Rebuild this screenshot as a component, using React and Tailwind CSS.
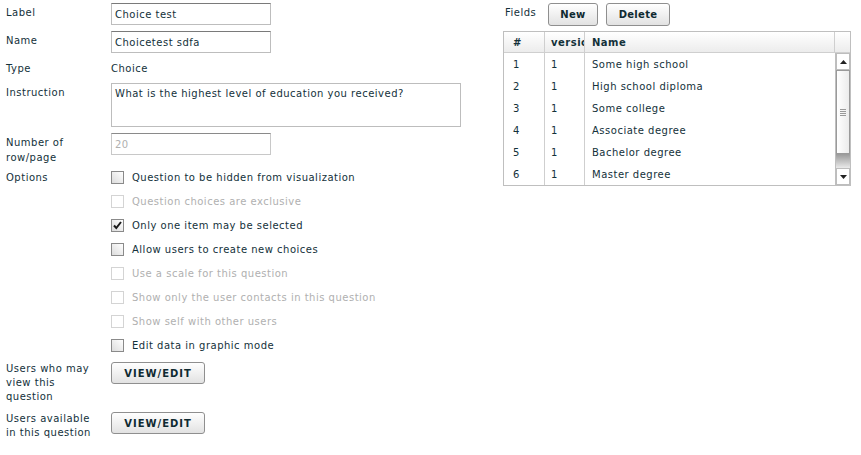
import React from 'react';

const options = [
  { text: 'Question to be hidden from visualization', disabled: false, checked: false },
  { text: 'Question choices are exclusive', disabled: true, checked: false },
  { text: 'Only one item may be selected', disabled: false, checked: true },
  { text: 'Allow users to create new choices', disabled: false, checked: false },
  { text: 'Use a scale for this question', disabled: true, checked: false },
  { text: 'Show only the user contacts in this question', disabled: true, checked: false },
  { text: 'Show self with other users', disabled: true, checked: false },
  { text: 'Edit data in graphic mode', disabled: false, checked: false },
];

const fields = [
  { id: 1, version: 1, name: 'Some high school' },
  { id: 2, version: 1, name: 'High school diploma' },
  { id: 3, version: 1, name: 'Some college' },
  { id: 4, version: 1, name: 'Associate degree' },
  { id: 5, version: 1, name: 'Bachelor degree' },
  { id: 6, version: 1, name: 'Master degree' },
];

const Checkbox = ({ checked, disabled }) => (
  <div
    className={`w-[13px] h-[13px] border flex items-center justify-center ${
      disabled
        ? 'border-[#d4d4d4] bg-white'
        : 'border-[#8a8a8a] bg-gradient-to-tr from-[#dcdcdc] to-white'
    }`}
  >
    {checked && (
      <svg width="9" height="9" viewBox="0 0 9 9">
        <path d="M1 4.5 L3.3 7 L8 1" fill="none" stroke="#1a1a1a" strokeWidth="2" />
      </svg>
    )}
  </div>
);

const Button = ({ children, className = '' }) => (
  <button
    className={`h-[22px] border border-[#8f8f8f] rounded-[3px] bg-gradient-to-b from-white to-[#e2e2e2] font-bold text-[#0f2a31] tracking-[0.3px] ${className}`}
  >
    {children}
  </button>
);

const Label = ({ children }) => (
  <div className="w-[105px] shrink-0 pt-[2px] pr-[10px] leading-[15px]">{children}</div>
);

const App = () => {
  return (
    <div className="w-[861px] h-[455px] bg-white text-[#13313a] text-[10px] tracking-[0.5px] font-['DejaVu_Sans',sans-serif] flex overflow-hidden">
      {/* Form */}
      <div className="w-[497px] pl-[6px] flex flex-col">
        <div className="flex mt-[3px]">
          <Label>Label</Label>
          <div className="w-[160px] h-[22px] border border-[#bdbdbd] border-t-[#7a7a7a] px-[3px] flex items-center">Choice test</div>
        </div>
        <div className="flex mt-[6px]">
          <Label>Name</Label>
          <div className="w-[160px] h-[22px] border border-[#bdbdbd] border-t-[#7a7a7a] px-[3px] flex items-center">Choicetest sdfa</div>
        </div>
        <div className="flex mt-[6px] h-[18px] items-center">
          <div className="w-[105px] shrink-0">Type</div>
          <div>Choice</div>
        </div>
        <div className="flex mt-[6px]">
          <Label>Instruction</Label>
          <div className="w-[350px] h-[44px] border border-[#bdbdbd] px-[3px] pt-[2px]">What is the highest level of education you received?</div>
        </div>
        <div className="flex mt-[6px] h-[22px]">
          <Label>Number of row/page</Label>
          <div className="w-[160px] h-[22px] border border-[#c8c8c8] border-t-[#8a8a8a] px-[3px] flex items-center text-[#b0b0b0]">20</div>
        </div>
        <div className="flex mt-[10px]">
          <div className="w-[105px] shrink-0 h-[24px] flex items-center">Options</div>
          <div className="flex flex-col">
            {options.map((o) => (
              <div key={o.text} className="h-[24px] flex items-center gap-[8px]">
                <Checkbox checked={o.checked} disabled={o.disabled} />
                <span className={o.disabled ? 'text-[#b0b0b0]' : ''}>{o.text}</span>
              </div>
            ))}
          </div>
        </div>
        <div className="flex mt-[5px]">
          <div className="w-[105px] shrink-0 leading-[14px] pr-[12px]">Users who may view this question</div>
          <Button className="w-[94px] tracking-[1px]">VIEW/EDIT</Button>
        </div>
        <div className="flex mt-[8px]">
          <div className="w-[105px] shrink-0 leading-[14px] pr-[12px]">Users available in this question</div>
          <Button className="w-[94px] tracking-[1px]">VIEW/EDIT</Button>
        </div>
      </div>

      {/* Fields */}
      <div className="flex flex-col pl-[6px]">
        <div className="flex items-center mt-[3px] h-[23px]">
          <span className="ml-[2px] w-[43px] -mt-[4px]">Fields</span>
          <Button className="w-[50px] h-[23px]">New</Button>
          <Button className="w-[64px] h-[23px] ml-[8px]">Delete</Button>
        </div>
        <div className="mt-[5px] w-[348px] border border-[#bfbfbf]">
          <div className="flex h-[21px] bg-gradient-to-b from-white to-[#ececec] border-b border-[#cfcfcf] font-bold">
            <div className="w-[41px] border-r border-[#cfcfcf] pl-[9px] flex items-center">#</div>
            <div className="w-[40px] border-r border-[#cfcfcf] pl-[6px] flex items-center overflow-hidden whitespace-nowrap">version</div>
            <div className="w-[250px] border-r border-[#cfcfcf] pl-[7px] flex items-center">Name</div>
            <div className="flex-1" />
          </div>
          <div className="flex">
            <div className="flex flex-col">
              {fields.map((f) => (
                <div key={f.id} className="flex h-[22px]">
                  <div className="w-[41px] border-r border-[#cfcfcf] pl-[9px] flex items-center">{f.id}</div>
                  <div className="w-[40px] border-r border-[#cfcfcf] pl-[6px] flex items-center">{f.version}</div>
                  <div className="w-[250px] pl-[7px] flex items-center">{f.name}</div>
                </div>
              ))}
            </div>
            <div className="flex-1 border-l border-[#bfbfbf] flex flex-col">
              <div className="h-[17px] border border-[#bdbdbd] bg-white flex items-center justify-center">
                <svg width="7" height="4" viewBox="0 0 7 4"><path d="M0 4 L3.5 0 L7 4 Z" fill="#222" /></svg>
              </div>
              <div className="h-[84px] border border-[#9a9a9a] bg-gradient-to-r from-white to-[#ececec] flex items-center justify-center">
                <div className="flex flex-col gap-[1px]">
                  <div className="w-[6px] h-px bg-[#999]" />
                  <div className="w-[6px] h-px bg-[#999]" />
                  <div className="w-[6px] h-px bg-[#999]" />
                  <div className="w-[6px] h-px bg-[#999]" />
                </div>
              </div>
              <div className="flex-1 bg-gradient-to-b from-[#9a9a9a] to-[#eaeaea]" />
              <div className="h-[17px] border border-[#bdbdbd] bg-white flex items-center justify-center">
                <svg width="7" height="4" viewBox="0 0 7 4"><path d="M0 0 L3.5 4 L7 0 Z" fill="#222" /></svg>
              </div>
            </div>
          </div>
        </div>
      </div>
    </div>
  );
};

export default App;
